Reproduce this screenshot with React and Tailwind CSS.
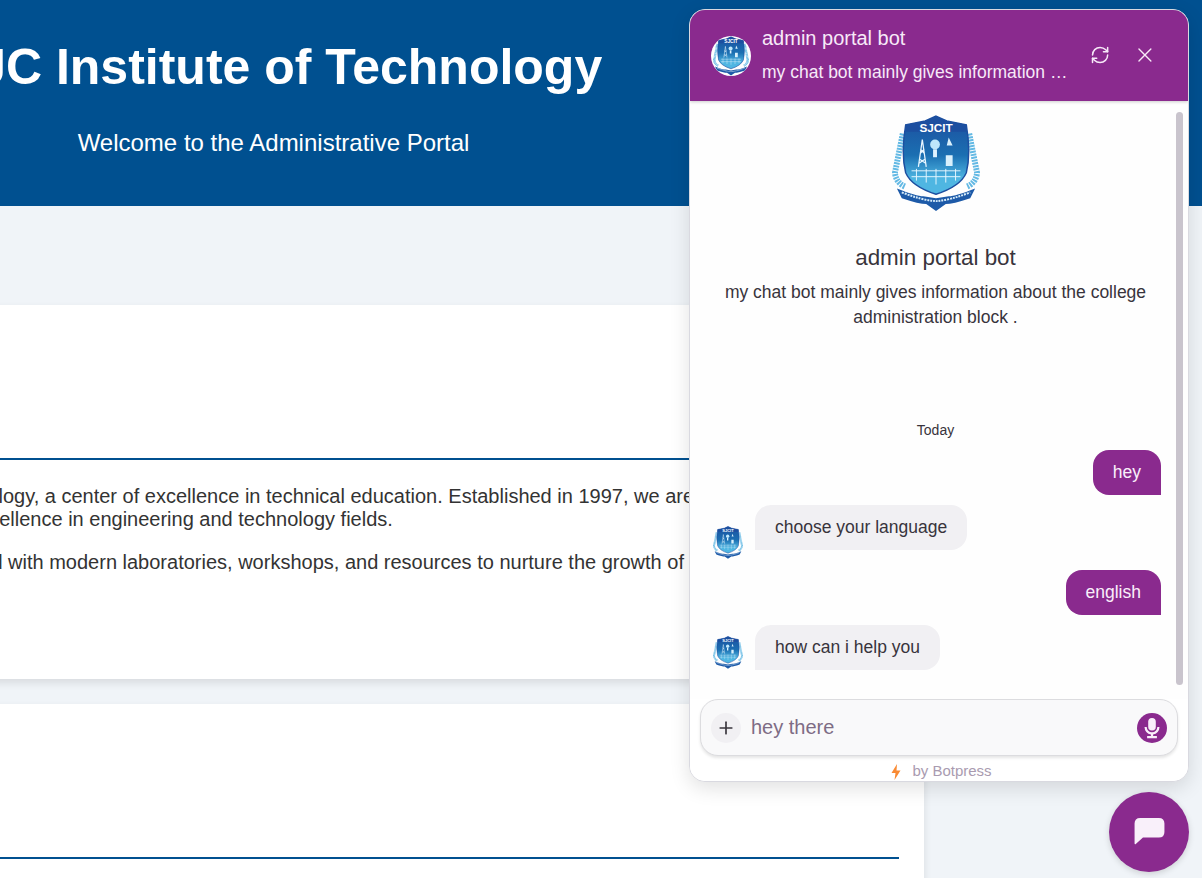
import React from 'react';
import { RefreshCw, X, Plus } from 'lucide-react';

function Logo({ className }) {
  return (
    <svg viewBox="0 0 90 100" className={className}>
      <defs>
        <linearGradient id="shieldFill" x1="0" y1="0" x2="0" y2="1">
          <stop offset="0" stopColor="#1c4f9f" />
          <stop offset="0.5" stopColor="#1b6fb2" />
          <stop offset="0.8" stopColor="#4fb6e2" />
        </linearGradient>
      </defs>
      {/* laurel on both sides */}
      <path d="M11 20 Q7 40 3 60 Q4 70 13 74" fill="none" stroke="#63b9e4" strokeWidth="6" strokeDasharray="2 1" />
      <path d="M79 20 Q83 40 87 60 Q86 70 77 74" fill="none" stroke="#63b9e4" strokeWidth="6" strokeDasharray="2 1" />
      {/* shield */}
      <path d="M45 2 L56 7 L76 11 Q81 40 76 60 Q70 74 45 82 Q20 74 14 60 Q9 40 14 11 L34 7 Z" fill="url(#shieldFill)" stroke="#1d4fa0" strokeWidth="1.5" />
      <path d="M14 11 L34 7 L45 2 L56 7 L76 11 L76 18 L14 18 Z" fill="#1c4fa0" />
      <text x="45" y="18" textAnchor="middle" fontFamily="Liberation Sans, sans-serif" fontSize="12" fontWeight="700" fill="#fff">SJCIT</text>
      {/* tower, bulb and figure */}
      <path d="M27 54 L31 26 L35 54 M29 36 L33 40 M33 36 L29 40 M28 46 L34 50 M34 46 L28 50" fill="none" stroke="#e8f6ff" strokeWidth="1.3" />
      <circle cx="44" cy="31" r="5" fill="#bfe7fb" />
      <path d="M42 36 H46 V44 H42 Z" fill="#dff3ff" />
      <path d="M55 42 h7 v11 h-7 Z M58 24 l4 8 h-6 Z" fill="#d9f0fc" />
      {/* fence */}
      <path d="M20 58 H70 M20 64 H70 M25 56 V68 M35 56 V70 M45 56 V72 M55 56 V70 M65 56 V68" stroke="#e4f6ff" strokeWidth="1" fill="none" />
      {/* ribbon */}
      <path d="M5 76 Q25 84 32 84 L45 86 L58 84 Q65 84 85 76 L80 86 Q62 92 55 92 L45 99 L35 92 Q28 92 10 86 Z" fill="#1d5aa8" />
      <path d="M10 80 Q30 88 45 89 Q60 88 80 80" fill="none" stroke="#d6ecfa" strokeWidth="2" strokeDasharray="2 1" />
    </svg>
  );
}

function Card({ children }) {
  return (
    <section className="bg-white shadow-[0_4px_8px_rgba(0,0,0,0.1)] p-[25px] w-[1302px]">
      <div className="h-[130px] border-b-2 border-[#005090]" />
      {children}
    </section>
  );
}

function UserBubble({ children }) {
  return (
    <div className="flex justify-end pr-[20px]">
      <div className="h-[45px] px-5 flex items-center bg-[#8a2a8e] text-[#f9eefa] text-[17.5px] rounded-[16px] rounded-br-none">
        {children}
      </div>
    </div>
  );
}

function BotBubble({ children, avatarClass }) {
  return (
    <div className="flex items-end gap-[12px] pl-[23px]">
      <Logo className={avatarClass} />
      <div className="h-[45px] px-5 flex items-center bg-[#f1f0f3] text-[#38343c] text-[17.5px] rounded-[16px] rounded-bl-none">
        {children}
      </div>
    </div>
  );
}

function ChatPanel() {
  return (
    <div className="absolute left-[689px] top-[9px] w-[500px] h-[773px] bg-white rounded-2xl border border-[#d9d9e0] shadow-[0_6px_20px_rgba(0,0,0,0.12)] overflow-hidden flex flex-col">
      <header className="h-[91px] shrink-0 bg-[#8a2a8e] flex items-center pl-[21px] pr-[31px] pb-[2px] text-[#f7e9f8] shadow-[0_1px_3px_rgba(0,0,0,0.2)] z-10">
        <div className="w-10 h-10 mt-[2px] rounded-full bg-white overflow-hidden flex items-center justify-center shrink-0">
          <Logo className="w-9 h-10" />
        </div>
        <div className="ml-[11px] w-[308px] flex flex-col gap-[10px]">
          <div className="text-[20px] leading-[24px]">admin portal bot</div>
          <div className="text-[17.5px] leading-[24px] truncate">my chat bot mainly gives information about the college administration block .</div>
        </div>
        <RefreshCw className="ml-[20px] w-[22px] h-[22px]" strokeWidth={1.8} />
        <X className="ml-[23px] w-[26px] h-[26px]" strokeWidth={1.4} />
      </header>

      <div className="relative flex-1 min-h-0 bg-[#fefefe]">
        <div className="absolute right-[5px] top-[11px] w-[7px] h-[573px] rounded-full bg-[#c9c4cd]" />
        <div className="pr-[7px]">
          <div className="flex flex-col items-center pt-[12px]">
            <Logo className="w-[88px] h-[100px]" />
            <h2 className="mt-[29px] text-[22.4px] leading-[32px] text-[#38343c]">admin portal bot</h2>
            <p className="mt-[6px] w-[440px] text-center text-[17.5px] leading-[25px] text-[#38343c]">
              my chat bot mainly gives information about the college administration block .
            </p>
          </div>
          <div className="mt-[90px] text-center text-[14px] leading-[20px] text-[#38343c]">Today</div>
          <div className="mt-[10px] flex flex-col">
            <UserBubble>hey</UserBubble>
            <div className="mt-[10px]"><BotBubble avatarClass="w-[30px] h-[35px] -mb-[10px]">choose your language</BotBubble></div>
            <div className="mt-[20px]"><UserBubble>english</UserBubble></div>
            <div className="mt-[10px]"><BotBubble avatarClass="w-[30px] h-[35px]">how can i help you</BotBubble></div>
          </div>
        </div>
      </div>

      <div className="shrink-0 bg-white px-[10px]">
        <div className="h-[57px] rounded-[18px] border border-[#dcdcdf] bg-[#f9f9fa] shadow-[0_2px_3px_rgba(0,0,0,0.1)] flex items-center px-[10px]">
          <div className="w-[30px] h-[30px] rounded-full bg-[#f1f0f3] flex items-center justify-center">
            <Plus className="w-5 h-5 text-[#38343c]" strokeWidth={2} />
          </div>
          <span className="ml-[10px] pb-[2px] flex-1 text-[20px] text-[#7e6c85]">hey there</span>
          <div className="w-[30px] h-[30px] rounded-full bg-[#8a2a8e] flex items-center justify-center">
            <svg viewBox="0 0 24 24" className="w-[24px] h-[24px]" fill="#f9eefa">
              <rect x="8.2" y="2" width="7.6" height="12.5" rx="3.8" />
              <path d="M4.5 11h2.2a5.3 5.3 0 0 0 10.6 0h2.2a7.5 7.5 0 0 1-6.4 7.4V20h3.8v2.2h-9.8V20h3.8v-1.6A7.5 7.5 0 0 1 4.5 11z" />
            </svg>
          </div>
        </div>
        <div className="h-[25px] flex items-center justify-center gap-[11px] pt-[6px] pl-[5px] text-[15px] text-[#a99bb0]">
          <svg viewBox="0 0 10 16" className="w-[10px] h-[16px]" fill="#f98a33">
            <path d="M6 0 L0.5 9 H4.5 L3.5 16 L9.5 6.5 H5.5 Z" />
          </svg>
          <span>by Botpress</span>
        </div>
      </div>
    </div>
  );
}

export default function App() {
  return (
    <div className="relative h-screen w-full overflow-hidden bg-[#f0f4f8] font-['Liberation_Sans',Arial,sans-serif]">
      {/* page is scrolled sideways in the shot, hence the negative margin */}
      <div className="-ml-[378px] w-[1580px]">
        <header className="h-[206px] bg-[#005090] text-white">
          <div className="w-[1303px] text-center">
            <h1 className="pt-[40px] text-[50px] leading-[55px] font-bold">SJC Institute of Technology</h1>
            <p className="mt-[34px] text-[24px] leading-[28px]">Welcome to the Administrative Portal</p>
          </div>
        </header>
        <main className="mt-[99px] flex flex-col gap-[25px]">
          <Card>
            <div className="h-[194px] pt-[25px] pl-[2px] text-[20px] leading-[23px] text-[#333] whitespace-nowrap">
              <p>Welcome to the SJC Institute of Technology, a center of excellence in technical education. Established in 1997, we are committed to academic</p>
              <p>fostering innovations and academic excellence in engineering and technology fields.</p>
              <p className="mt-[20px]">Our state-of-the-art campus is equipped with modern laboratories, workshops, and resources to nurture the growth of our students.</p>
            </div>
          </Card>
          <Card />
        </main>
      </div>

      <ChatPanel />

      <button className="absolute left-[1109px] top-[792px] w-20 h-20 rounded-full bg-[#8a2a8e] shadow-[0_2px_6px_rgba(0,0,0,0.15)] flex items-center justify-center">
        <svg viewBox="0 0 32 30" className="w-[31px] h-[28px]" fill="#f9f0fa">
          <path d="M6 0 H26 Q32 0 32 6 V15 Q32 21 26 21 H9 L1 28 Q0 28.5 0 27 V6 Q0 0 6 0 Z" />
        </svg>
      </button>
    </div>
  );
}
